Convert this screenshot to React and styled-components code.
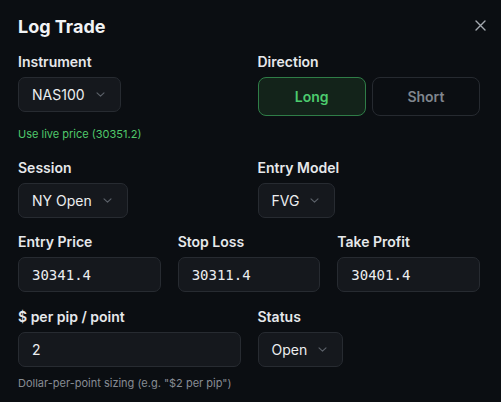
import React from 'react'
import styled, { createGlobalStyle } from 'styled-components'

const GlobalStyle = createGlobalStyle`
  html, body {
    margin: 0;
    background: #0b0e12;
  }
  body {
    font-family: Inter, "Noto Sans", sans-serif;
    color: #e8eaed;
  }
`

const Dialog = styled.div`
  position: relative;
  box-sizing: border-box;
  width: 501px;
  height: 402px;
  padding: 15px 21px 0 18px;
  background: #0b0e12;
  overflow: hidden;
`

const Title = styled.h2`
  margin: 0 0 13px;
  font-size: 18px;
  line-height: 24px;
  font-weight: 700;
  color: #f1f3f5;
`

const Close = styled.button`
  position: absolute;
  top: 14px;
  right: 10px;
  width: 22px;
  height: 22px;
  padding: 0;
  display: flex;
  align-items: center;
  justify-content: center;
  background: none;
  border: none;
  color: #a4a9b0;
`

const Row = styled.div`
  display: grid;
  grid-template-columns: repeat(${p => p.cols || 2}, 1fr);
  column-gap: 17px;
  margin-bottom: ${p => p.gap ?? 14}px;
`

const Field = styled.div`
  display: flex;
  flex-direction: column;
  align-items: flex-start;
`

const Label = styled.label`
  font-size: 14px;
  line-height: 20px;
  font-weight: 600;
  color: #e6e8eb;
  margin-bottom: 5px;
`

const Select = styled.div`
  box-sizing: border-box;
  display: inline-flex;
  align-items: center;
  gap: 11px;
  height: 35px;
  padding: 0 15px 0 13px;
  background: #15181d;
  border: 1px solid #272b31;
  border-radius: 7px;
  font-size: 14px;
  color: #eceef0;
  svg {
    color: #5c626a;
  }
`

const Input = styled.div`
  box-sizing: border-box;
  width: 100%;
  height: 35px;
  display: flex;
  align-items: center;
  padding: 0 13px;
  background: #15181d;
  border: 1px solid #272b31;
  border-radius: 7px;
  font-family: ${p => (p.mono ? '"DejaVu Sans Mono", monospace' : 'Inter, sans-serif')};
  font-size: 14px;
  color: #eceef0;
`

const Toggle = styled.div`
  display: grid;
  grid-template-columns: 1fr 1fr;
  gap: 6px;
  width: 100%;
`

const DirButton = styled.button`
  height: 39px;
  border-radius: 8px;
  font-family: Inter, sans-serif;
  font-size: 14px;
  font-weight: 600;
  background: ${p => (p.active ? '#13231a' : 'transparent')};
  border: 1px solid ${p => (p.active ? '#2f7d47' : '#262a30')};
  color: ${p => (p.active ? '#4ccb6e' : '#80868e')};
`

const Hint = styled.div`
  margin-top: ${p => p.top ?? 14}px;
  font-size: 11px;
  line-height: 16px;
  color: ${p => (p.green ? '#50c96b' : '#878c94')};
`

const Chevron = () => (
  <svg width="9" height="5" viewBox="0 0 9 5" fill="none">
    <path d="M1 0.8l3.5 3.4 3.5-3.4" stroke="currentColor" strokeWidth="1.1" strokeLinecap="round" strokeLinejoin="round" />
  </svg>
)

const Dropdown = ({ value }) => (
  <Select>
    {value}
    <Chevron />
  </Select>
)

export default function App() {
  return (
    <Dialog>
      <GlobalStyle />
      <Title>Log Trade</Title>
      <Close aria-label="Close">
        <svg width="11" height="11" viewBox="0 0 11 11">
          <path d="M1 1l9 9M10 1l-9 9" stroke="currentColor" strokeWidth="1.4" strokeLinecap="round" />
        </svg>
      </Close>

      <Row gap={16}>
        <Field>
          <Label>Instrument</Label>
          <Dropdown value="NAS100" />
          <Hint green>Use live price (30351.2)</Hint>
        </Field>
        <Field>
          <Label>Direction</Label>
          <Toggle>
            <DirButton active>Long</DirButton>
            <DirButton>Short</DirButton>
          </Toggle>
        </Field>
      </Row>

      <Row>
        <Field>
          <Label>Session</Label>
          <Dropdown value="NY Open" />
        </Field>
        <Field>
          <Label>Entry Model</Label>
          <Dropdown value="FVG" />
        </Field>
      </Row>

      <Row cols={3} gap={15}>
        <Field>
          <Label>Entry Price</Label>
          <Input mono>30341.4</Input>
        </Field>
        <Field>
          <Label>Stop Loss</Label>
          <Input mono>30311.4</Input>
        </Field>
        <Field>
          <Label>Take Profit</Label>
          <Input mono>30401.4</Input>
        </Field>
      </Row>

      <Row>
        <Field>
          <Label>$ per pip / point</Label>
          <Input>2</Input>
          <Hint top={8}>Dollar-per-point sizing (e.g. "$2 per pip")</Hint>
        </Field>
        <Field>
          <Label>Status</Label>
          <Dropdown value="Open" />
        </Field>
      </Row>
    </Dialog>
  )
}
